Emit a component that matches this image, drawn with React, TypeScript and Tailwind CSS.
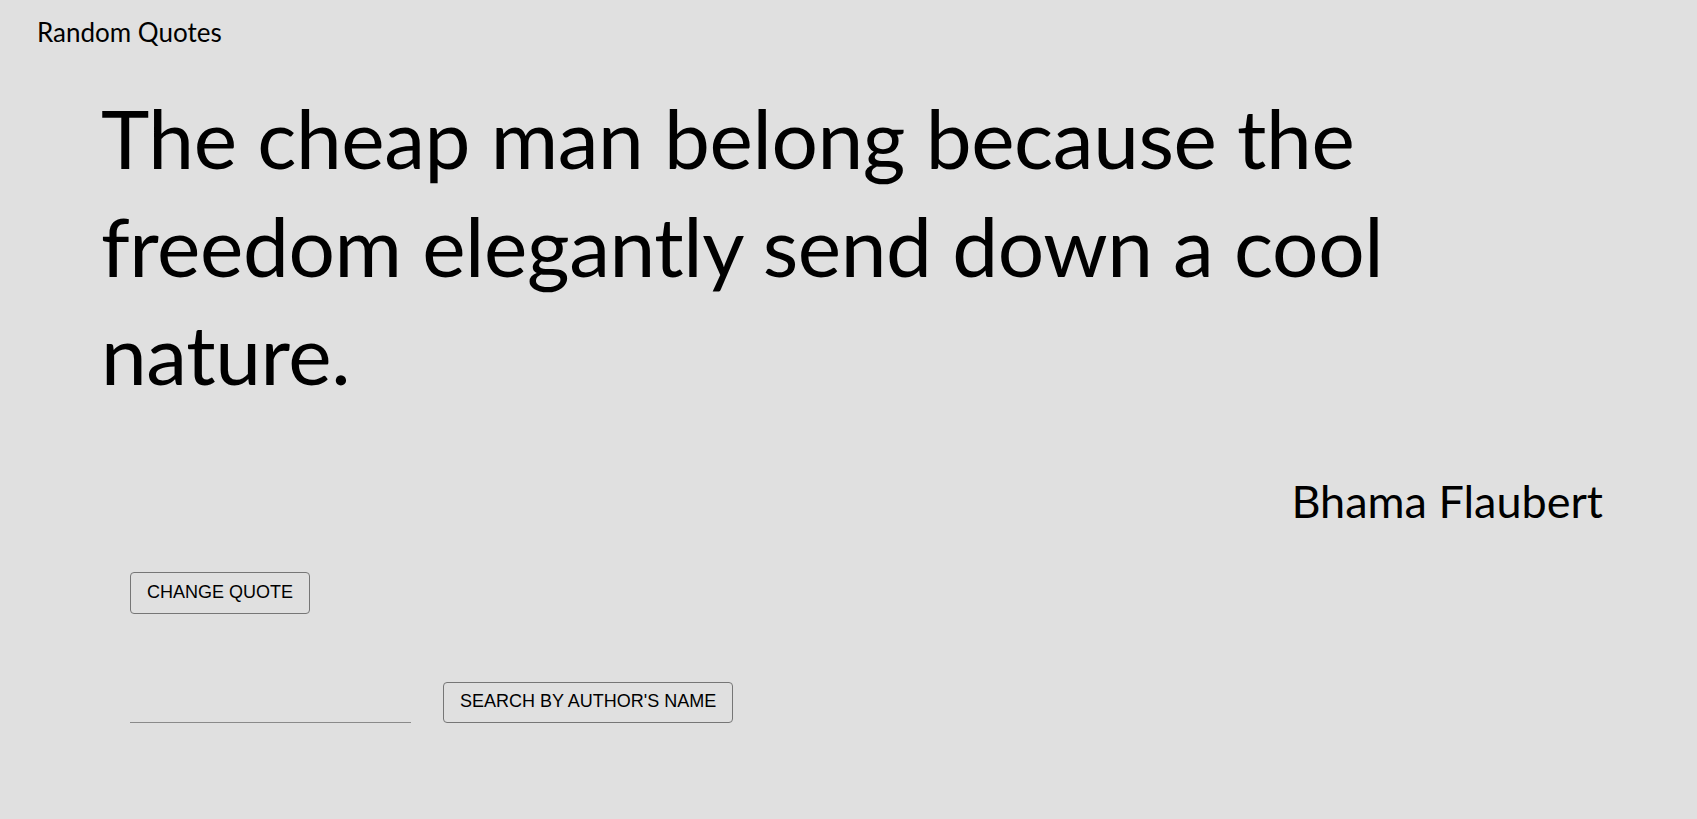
import React, { useState } from "react"

const quotes = [
  { text: "The cheap man belong because the freedom elegantly send down a cool nature.", author: "Bhama Flaubert" },
]

const App: React.FC = () => {
  const [index, setIndex] = useState(0)
  const [author, setAuthor] = useState("")
  const quote = quotes[index]

  return (
    <div className="min-h-screen bg-[#e0e0e0] text-black font-['Lato','Open_Sans',sans-serif]">
      <header className="pl-[37px] pt-[16px] text-[26px] leading-[32px]">Random Quotes</header>

      <main className="pl-[101px] pr-[94px]">
        <p className="mt-[35px] text-[82px] leading-[108px] tracking-[-0.4px]">{quote.text}</p>
        <p className="mt-[67px] text-right text-[45px] leading-[54px]">{quote.author}</p>
      </main>

      <div className="pl-[130px] font-['Liberation_Sans',Arial,sans-serif] text-[18px]">
        <button
          className="mt-[44px] rounded-[4px] border border-[#767676] px-4 pt-[9px] pb-[11px] leading-[20px] text-black"
          onClick={() => setIndex((index + 1) % quotes.length)}
        >
          CHANGE QUOTE
        </button>

        <div className="mt-[68px] flex items-end gap-[32px]">
          <input
            type="text"
            value={author}
            onChange={(e) => setAuthor(e.target.value)}
            className="w-[281px] border-b border-[#8a8a8a] bg-transparent pb-1 text-[16px] outline-none"
          />
          <button className="rounded-[4px] border border-[#767676] px-4 pt-[9px] pb-[11px] leading-[19px] text-black">
            SEARCH BY AUTHOR&apos;S NAME
          </button>
        </div>
      </div>
    </div>
  )
}

export default App
